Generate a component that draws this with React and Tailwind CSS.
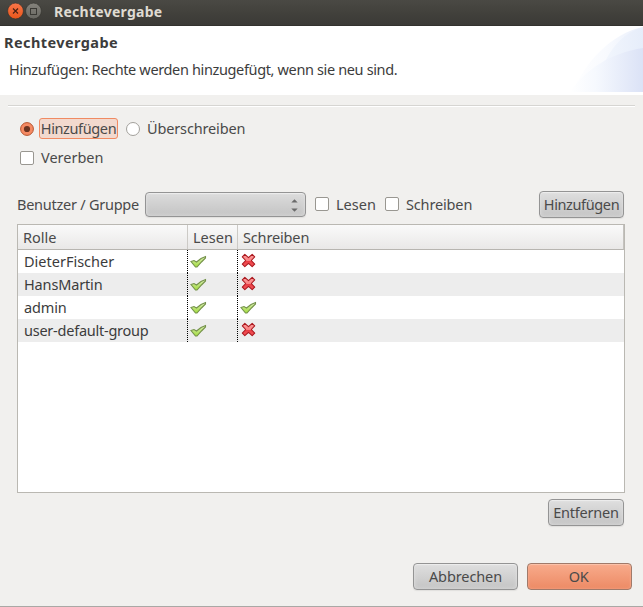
import React from "react";

const FONT = "font-['Noto_Sans','Open_Sans',sans-serif]";

function Check() {
  return (
    <svg width="17" height="14" viewBox="0 0 17 14" className="block">
      <defs>
        <linearGradient id="leaf" x1="0" y1="0" x2="0" y2="1">
          <stop offset="0" stopColor="#dcefb8" />
          <stop offset="1" stopColor="#a2dc3c" />
        </linearGradient>
      </defs>
      <path
        d="M1 6.5 L4 5.5 L6.5 7 L11 3.5 L15.5 1.5 V3 L11.5 7 L7 12 L5.5 12 Z"
        fill="url(#leaf)"
        stroke="#74914a"
        strokeWidth="1.1"
      />
    </svg>
  );
}

function Cross() {
  return (
    <svg width="15" height="15" viewBox="0 0 15 15" className="block">
      <defs>
        <linearGradient id="ruby" x1="0" y1="0" x2="0" y2="1">
          <stop offset="0" stopColor="#ff9c9c" />
          <stop offset="0.5" stopColor="#f98383" />
          <stop offset="0.55" stopColor="#ea3c42" />
          <stop offset="1" stopColor="#f4585d" />
        </linearGradient>
      </defs>
      <path
        d="M3.8 1.3 L7.5 4.7 L11.2 1.3 L13.7 3.8 L10.3 7.5 L13.7 11.2 L11.2 13.7 L7.5 10.3 L3.8 13.7 L1.3 11.2 L4.7 7.5 L1.3 3.8 Z"
        fill="url(#ruby)"
        stroke="#ab1a20"
        strokeWidth="1.1"
        strokeLinejoin="round"
      />
    </svg>
  );
}

function Box() {
  return <span className="block h-[14px] w-[14px] shrink-0 rounded-[2px] border border-[#999791] bg-white" />;
}

function Button({ className, primary, children }) {
  return (
    <button
      className={
        "flex h-[27px] items-center justify-center whitespace-nowrap rounded-[4px] border pb-[2px] " +
        (primary
          ? "border-[#a07a6a] bg-linear-to-b from-[#f8ab8b] to-[#ec8a65] shadow-[inset_0_1px_1px_#fbc4ab,inset_0_0_3px_#f7a88a] "
          : "border-[#949494] bg-linear-to-b from-[#dfdfdf] to-[#c4c4c4] shadow-[inset_0_1px_1px_#eeeeee,inset_0_0_4px_#dedede,0_1px_1px_#e0dfdd] ") +
        className
      }
    >
      {children}
    </button>
  );
}

const rows = [
  { name: "DieterFischer", write: false, track: "tracking-normal" },
  { name: "HansMartin", write: false, track: "tracking-[-0.15px]" },
  { name: "admin", write: true, track: "tracking-[-0.15px]" },
  { name: "user-default-group", write: false, track: "tracking-[-0.24px]" },
];

export default function App() {
  return (
    <div className={"flex h-[607px] w-[643px] flex-col overflow-hidden border-b border-[#aaa8a5] bg-[#f1f0ee] text-[14.5px] leading-5 text-[#4a4a4a] " + FONT}>
      <div className="flex h-[26px] shrink-0 items-center border-b border-[#33322e] bg-linear-to-b from-[#4a4944] via-[#42413c] to-[#3b3a36] pl-[7px]">
        <svg width="36" height="18" viewBox="0 0 36 18" className="-mt-[3px] shrink-0">
          <defs>
            <linearGradient id="close" x1="0" y1="0" x2="0" y2="1">
              <stop offset="0" stopColor="#f9764a" />
              <stop offset="1" stopColor="#e9561a" />
            </linearGradient>
            <linearGradient id="max" x1="0" y1="0" x2="0" y2="1">
              <stop offset="0" stopColor="#85837c" />
              <stop offset="1" stopColor="#686761" />
            </linearGradient>
          </defs>
          <circle cx="8.5" cy="9" r="7.9" fill="url(#close)" stroke="#30302c" strokeWidth="0.6" />
          <path d="M6 6.5 L11 11.5 M11 6.5 L6 11.5" stroke="#4b2112" strokeWidth="1.2" />
          <circle cx="26.5" cy="9" r="7.9" fill="url(#max)" stroke="#30302c" strokeWidth="0.6" />
          <rect x="23.5" y="6.5" width="6" height="6" fill="none" stroke="#3a3934" />
        </svg>
        <span className="-mt-[1px] ml-[11px] whitespace-nowrap text-[14px] font-bold tracking-[0.27px] text-[#dfdbd2]">Rechtevergabe</span>
      </div>

      <div className="flex h-[69px] shrink-0 justify-between bg-white">
        <div className="whitespace-nowrap pl-1 pt-[6px]">
          <div className="text-[14.5px] font-bold tracking-[0.42px] text-[#3c3c3c]">Rechtevergabe</div>
          <div className="pl-[5px] pt-[7px] tracking-[-0.36px] text-[#3c3c3c]">
            Hinzufügen: Rechte werden hinzugefügt, wenn sie neu sind.
          </div>
        </div>
        <svg width="73" height="66" viewBox="0 0 73 66" className="shrink-0">
          <defs>
            <linearGradient id="arcA" x1="0" y1="0" x2="1" y2="0">
              <stop offset="0" stopColor="#ffffff" />
              <stop offset="0.5" stopColor="#f8fafe" />
              <stop offset="1" stopColor="#e9effb" />
            </linearGradient>
            <linearGradient id="arcB" x1="0" y1="0" x2="1" y2="0">
              <stop offset="0" stopColor="#ffffff" />
              <stop offset="0.35" stopColor="#f6f9fe" />
              <stop offset="1" stopColor="#dbe2f6" />
            </linearGradient>
            <linearGradient id="arcC" x1="0" y1="0" x2="1" y2="0">
              <stop offset="0" stopColor="#f2f6fd" />
              <stop offset="1" stopColor="#e6edfa" />
            </linearGradient>
          </defs>
          <path d="M2 66 C16 36 40 8 73 1 V66 Z" fill="url(#arcA)" />
          <path d="M34 38 C42 20 54 7 73 1 V30 L34 40 Z" fill="url(#arcC)" />
          <path d="M0 66 C15 44 40 27 73 22 V66 Z" fill="url(#arcB)" />
        </svg>
      </div>

      <div className="mx-2 mt-[10px] h-[2px] shrink-0 border-b border-white bg-[#d6d5d2]" />

      <div className="mt-[11px] flex h-[21px] shrink-0 items-center whitespace-nowrap pl-5">
        <svg width="14" height="14" viewBox="0 0 14 14" className="shrink-0">
          <circle cx="7" cy="7" r="6.4" fill="#f58a63" stroke="#b5542f" />
          <circle cx="7" cy="7" r="3.1" fill="#6b3421" />
        </svg>
        <span className="ml-[5px] flex h-[21px] w-[79px] items-center justify-center rounded-[3px] border border-[#f08a62] bg-[#f2d9ce] pb-[2px] tracking-[-0.38px]">
          Hinzufügen
        </span>
        <span className="ml-2 block h-[14px] w-[14px] rounded-full border border-[#a3a19c] bg-white" />
        <span className="ml-[7px] pb-[2px] tracking-[-0.15px]">Überschreiben</span>
      </div>

      <div className="mt-2 flex h-5 shrink-0 items-center pl-5">
        <span className="mt-[1px]"><Box /></span>
        <span className="ml-[7px]">Vererben</span>
      </div>

      <div className="mt-[24px] flex h-[27px] shrink-0 items-center whitespace-nowrap pl-[17px]">
        <span className="w-[128px] pb-[1px] tracking-[-0.25px]">Benutzer / Gruppe</span>
        <div className="flex h-[25px] w-[161px] items-center justify-end rounded-[4px] border border-[#949494] bg-linear-to-b from-[#dcdcdc] to-[#c4c4c4] pr-[7px] shadow-[inset_0_1px_1px_#eeeeee,inset_0_0_4px_#dedede,0_1px_1px_#e0dfdd]">
          <svg width="7" height="13" viewBox="0 0 7 13" className="mt-[2px]">
            <path d="M0.3 3.5 L3.5 0.3 L6.7 3.5 Z M0.3 9.5 L3.5 12.7 L6.7 9.5 Z" fill="#6a6a6a" />
          </svg>
        </div>
        <span className="ml-[9px] pb-[1px]"><Box /></span>
        <span className="ml-[7px] w-[49px] pb-[2px]">Lesen</span>
        <span className="pb-[1px]"><Box /></span>
        <span className="ml-[7px] w-[133px] pb-[2px] tracking-[-0.15px]">Schreiben</span>
        <Button className="w-[85px] tracking-[-0.38px]">Hinzufügen</Button>
      </div>

      <div className="ml-[17px] mt-[6px] flex h-[269px] w-[608px] shrink-0 flex-col border border-[#bab8b2] bg-white">
        <div className="flex h-[25px] shrink-0 border-b border-r border-[#b7b5b0] border-r-[#c4c2be] bg-linear-to-b from-[#fafafa] to-[#e9e8e7]">
          <span className="flex w-[170px] items-center border-r border-[#cccac6] pl-[5px]">Rolle</span>
          <span className="flex w-[50px] items-center border-r border-[#cccac6] pl-[5px]">Lesen</span>
          <span className="flex items-center pl-[5px] tracking-[-0.15px]">Schreiben</span>
        </div>
        {rows.map((r) => (
          <div key={r.name} className="flex h-[23px] shrink-0 odd:bg-[#ededed] even:bg-white">
            <span className={"flex w-[170px] items-center border-r border-dotted border-black pb-[2px] pl-[6px] text-[#3c3c3c] " + r.track}>{r.name}</span>
            <span className="flex w-[50px] items-center border-r border-dotted border-black pl-[2px]"><Check /></span>
            <span className={r.write ? "flex items-center pl-[2px]" : "flex items-center pb-[2px] pl-[3px]"}>{r.write ? <Check /> : <Cross />}</span>
          </div>
        ))}
      </div>

      <div className="mt-[6px] flex shrink-0 justify-end pr-[19px]">
        <Button className="w-[76px] tracking-[-0.2px]">Entfernen</Button>
      </div>
      <div className="mt-[37px] flex shrink-0 justify-end gap-[9px] pr-[11px]">
        <Button className="w-[105px] tracking-[-0.1px]">Abbrechen</Button>
        <Button primary className="w-[105px] pr-[2px] tracking-[-0.5px]">OK</Button>
      </div>
    </div>
  );
}
